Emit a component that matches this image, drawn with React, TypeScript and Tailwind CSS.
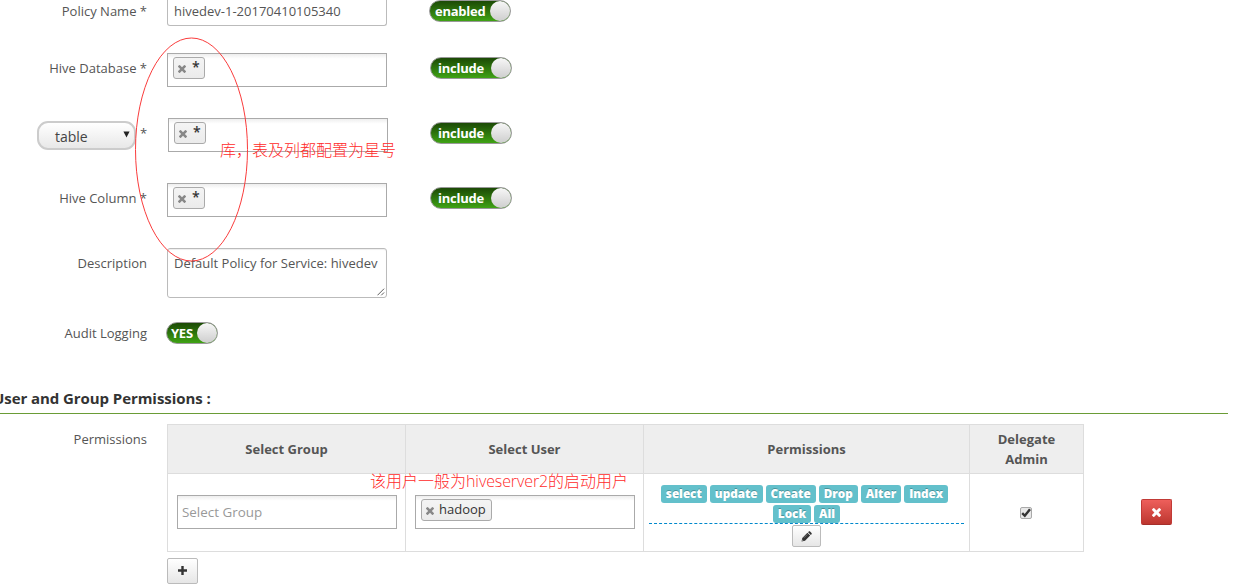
import type { ReactNode } from "react";

const REMOVE_PATH =
  "M1298 1322q0-40-28-68l-294-294 294-294q28-28 28-68t-28-68l-136-136q-28-28-68-28t-68 28l-294 294-294-294q-28-28-68-28t-68 28l-136 136q-28 28-28 68t28 68l294 294-294 294q-28 28-28 68t28 68l136 136q28 28 68 28t68-28l294-294 294 294q28 28 68 28t68-28l136-136q28-28 28-68z";

function RemoveIcon({ className }: { className: string }) {
  return (
    <svg viewBox="110 366 1188 1188" className={className} fill="currentColor">
      <path d={REMOVE_PATH} />
    </svg>
  );
}

function PencilIcon() {
  return (
    <svg viewBox="0 0 12 12" className="h-[11px] w-[11px]" fill="currentColor">
      <path d="M.6 11.4 1.4 7.6 7 2l3 3L4.4 10.6ZM7.7 1.3 8.5.5c.4-.4 1-.4 1.4 0l1.6 1.6c.4.4.4 1 0 1.4l-.8.8Z" />
      <path d="M1.7 9.4 2.6 10.3 1.6 10.6 1.4 10.4Z" fill="#f0f0f0" />
      <path d="M3.2 7.4 7 3.6" stroke="#bbb" strokeWidth=".5" />
    </svg>
  );
}

function Toggle({ label, className }: { label: string; className: string }) {
  return (
    <div
      className={`flex h-[22px] items-center justify-between overflow-hidden rounded-full border border-[#999] bg-gradient-to-b from-[#1c4a06] to-[#3fa314] font-bold text-white ${className}`}
    >
      <span className="leading-5 tracking-[-0.25px]">{label}</span>
      <span className="-mr-px h-5 w-[21px] shrink-0 rounded-full bg-gradient-to-b from-[#f7f7f7] to-[#cecece]" />
    </div>
  );
}

function TagBox({ tag, className = "" }: { tag: string; className?: string }) {
  const star = tag === "*";
  return (
    <div
      className={`h-[34px] w-[220px] shrink-0 border border-[#aaa] bg-gradient-to-b from-[#eee] to-white to-15% pt-[3px] pl-[5px] ${className}`}
    >
      <div className="flex h-[22px] w-fit items-center rounded-[3px] border border-[#aaa] bg-gradient-to-b from-[#f4f4f4] to-[#ebebeb] pr-1 pl-1 text-[#333]">
        <RemoveIcon className="mt-[2px] h-2 w-2 text-[#888]" />
        <span className={star ? "-mt-[2px] ml-[6px] w-2 text-sm leading-5 font-semibold" : "-mt-[2px] ml-[5px] pr-px leading-5"}>
          {tag}
        </span>
      </div>
    </div>
  );
}

function Row({ label, className, children }: { label: ReactNode; className: string; children: ReactNode }) {
  return (
    <div className={`flex shrink-0 items-start ${className}`}>
      <div className="mr-5 flex w-[147px] shrink-0 justify-end pt-[5px] leading-5 whitespace-nowrap">{label}</div>
      {children}
    </div>
  );
}

const permissions = ["select", "update", "Create", "Drop", "Alter", "Index", "Lock", "All"];

export default function App() {
  return (
    <main className="relative flex h-[584px] w-[1237px] flex-col overflow-hidden bg-white font-['Open_Sans',sans-serif] text-[13px] text-[#555]">
      <div className="flex h-[53px] shrink-0 items-start">
        <div className="mr-5 w-[147px] pt-px text-right leading-5">Policy Name *</div>
        <div className="h-[26px] w-[220px] rounded-b-[3px] border border-t-0 border-[#bbb] pt-px pl-[6px] leading-5">
          hivedev-1-20170410105340
        </div>
        <Toggle label="enabled" className="ml-[42px] w-[82px] pl-[5px]" />
      </div>

      <Row label="Hive Database *" className="h-[65px]">
        <TagBox tag="*" />
        <Toggle label="include" className="mt-1 ml-[43px] w-[82px] pl-[7px]" />
      </Row>

      <div className="flex h-[65px] shrink-0 items-start">
        <div className="mt-[3px] ml-[37px] flex h-[29px] w-[99px] items-center justify-between rounded-[11px] border-2 border-[#ccc] bg-gradient-to-b from-white to-[#e8e8e8] pr-1 pl-4 text-sm text-[#444]">
          <span className="pt-[2px]">table</span>
          <svg viewBox="0 0 8 7" className="mb-[3px] h-[7px] w-[7px]" fill="#222">
            <path d="M.5 0h7L4 7Z" />
          </svg>
        </div>
        <span className="mt-[5px] ml-1 w-[28px] leading-5">*</span>
        <TagBox tag="*" />
        <Toggle label="include" className="mt-1 ml-[42px] w-[82px] pl-[7px]" />
      </div>

      <Row label="Hive Column *" className="h-[65px]">
        <TagBox tag="*" />
        <Toggle label="include" className="mt-1 ml-[43px] w-[82px] pl-[7px]" />
      </Row>

      <Row label="Description" className="h-[74px]">
        <div className="flex h-[50px] w-[220px] justify-between rounded-[3px] border border-[#bbb] pt-1 pl-[6px] leading-5 shadow-[inset_0_1px_1px_#eee]">
          <span className="whitespace-nowrap">Default Policy for Service: hivedev</span>
          <svg viewBox="0 0 8 8" className="mr-px mb-px h-2 w-2 self-end" stroke="#555" fill="none">
            <path d="M.5 7.5l7-7M4.5 7.5l3-3" />
          </svg>
        </div>
      </Row>

      <div className="flex h-[66px] shrink-0 items-start">
        <div className="mr-[19px] w-[147px] pt-px text-right leading-5">Audit Logging</div>
        <Toggle label="YES" className="w-[52px] pl-1" />
      </div>

      <h2 className="-ml-[7px] h-[26px] w-[1235px] shrink-0 border-b border-[#6a9c36] text-[15px] leading-[21px] font-bold tracking-[-0.07px] text-[#333]">
        User and Group Permissions :
      </h2>

      <div className="mt-[10px] flex shrink-0 items-start">
        <div className="mr-5 w-[147px] pt-[5px] text-right leading-5">Permissions</div>
        <div>
          <div className="grid h-[128px] w-[917px] grid-cols-[238px_238px_326px_113px] grid-rows-[49px_1fr] border border-[#ddd]">
            <div className="flex items-center justify-center border-r border-b border-[#ddd] bg-[#eee] pt-px font-bold">Select Group</div>
            <div className="flex items-center justify-center border-r border-b border-[#ddd] bg-[#eee] pt-px font-bold">Select User</div>
            <div className="flex items-center justify-center border-r border-b border-[#ddd] bg-[#eee] pt-px font-bold">Permissions</div>
            <div className="flex items-center justify-center border-b border-[#ddd] bg-[#eee] text-center leading-5 font-bold">
              Delegate
              <br />
              Admin
            </div>
            <div className="border-r border-[#ddd] pt-[21px] pl-[9px]">
              <div className="h-[34px] w-[220px] border border-[#aaa] bg-gradient-to-b from-[#eee] to-white to-15% pl-1 text-[13.4px] leading-8 text-[#999]">
                Select Group
              </div>
            </div>
            <div className="border-r border-[#ddd] pt-[21px] pl-[9px]">
              <TagBox tag="hadoop" />
            </div>
            <div className="flex flex-col items-center border-r border-[#ddd] px-[5px] pt-[11px]">
              <div className="flex h-[39px] w-full flex-wrap content-start justify-center gap-x-[3px] gap-y-[2px] border-b border-dashed border-[#08c] px-2">
                {permissions.map((name) => (
                  <span
                    key={name}
                    className={`h-[18px] rounded-[3px] bg-[#63c0cb] px-[5px] text-[11.7px] leading-[17px] font-extrabold text-white [text-shadow:0_-1px_0_rgba(0,0,0,0.25)] ${name === "Index" ? "mr-1" : ""}`}
                  >
                    {name}
                  </span>
                ))}
              </div>
              <div className="mt-px flex h-[22px] w-[29px] items-center justify-center rounded-[2px] border border-[#bbb] bg-gradient-to-b from-white to-[#e6e6e6] text-[#333]">
                <PencilIcon />
              </div>
            </div>
            <div className="flex justify-center pt-[33px] pr-[2px]">
              <div className="flex h-3 w-3 items-center justify-center rounded-[2px] border border-[#aaa] bg-[#e8e8e8]">
                <svg viewBox="0 0 10 10" className="h-[10px] w-[10px]" fill="none" stroke="#333" strokeWidth="2.4">
                  <path d="M1.2 5.2 3.8 7.8 9 1.2" />
                </svg>
              </div>
            </div>
          </div>
          <div className="mt-[6px] flex h-[26px] w-[31px] items-center justify-center rounded-[2px] border border-[#bbb] bg-gradient-to-b from-white to-[#e6e6e6] pb-[2px]">
            <svg viewBox="0 0 9 9" className="h-[9px] w-[9px]" fill="#333">
              <path d="M3.3 0h2.4v3.3H9v2.4H5.7V9H3.3V5.7H0V3.3h3.3Z" />
            </svg>
          </div>
        </div>
        <div className="mt-[75px] ml-[57px] flex h-[26px] w-[31px] items-center justify-center rounded-[2px] border border-[#c13a36] border-b-[#a52f2b] bg-gradient-to-b from-[#ee5f5b] to-[#bd362f] text-white">
          <RemoveIcon className="h-[9px] w-[9px]" />
        </div>
      </div>

      <svg className="pointer-events-none absolute top-[37px] left-[134px] h-[225px] w-[115px]" viewBox="0 0 115 225" fill="none">
        <ellipse cx="57.5" cy="112.5" rx="56" ry="111.5" stroke="#fa3c3c" />
      </svg>
      <span className="absolute top-[138px] left-[220px] font-['Noto_Sans_CJK_SC',sans-serif] text-base leading-[22px] font-light whitespace-nowrap text-[#ff2a2a]">
        库，表及列都配置为星号
      </span>
      <span className="absolute top-[469px] left-[370px] font-['Noto_Sans_CJK_SC',sans-serif] text-base leading-[22px] font-light whitespace-nowrap text-[#ff2a2a]">
        该用户一般为<span className="font-['Open_Sans'] font-light tracking-[-0.1px]">hiveserver2</span>的启动用户
      </span>
    </main>
  );
}
